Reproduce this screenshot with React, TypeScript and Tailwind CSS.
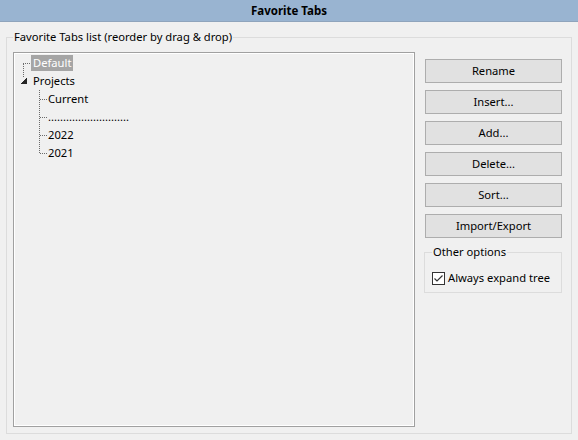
import React from 'react';

const buttons = ['Rename', 'Insert...', 'Add...', 'Delete...', 'Sort...', 'Import/Export'];

function TreeLines() {
  // dotted connector lines of the tree view
  return (
    <svg className="absolute left-0 top-0 pointer-events-none" width="60" height="120" shapeRendering="crispEdges">
      <g stroke="#6b6b6b" strokeWidth="1" strokeDasharray="1 1">
        <line x1="8" y1="9.5" x2="16" y2="9.5" />
        <line x1="8.5" y1="10" x2="8.5" y2="24" />
        <line x1="24.5" y1="36" x2="24.5" y2="100" />
        <line x1="25" y1="45.5" x2="32" y2="45.5" />
        <line x1="25" y1="63.5" x2="32" y2="63.5" />
        <line x1="25" y1="81.5" x2="32" y2="81.5" />
        <line x1="25" y1="99.5" x2="32" y2="99.5" />
      </g>
      <polygon points="11.5,24 11.5,29.5 6,29.5" fill="#262626" />
    </svg>
  );
}

function Tree() {
  return (
    <div className="w-[402px] h-[375px] border border-[#a0a0a0]">
      <div className="relative h-full border border-white">
        <TreeLines />
        <div className="h-[18px] flex items-center pl-[16px]">
          <span className="bg-[#a5a5a5] text-white px-[2px] leading-[16px]">Default</span>
        </div>
        <div className="h-[18px] flex items-center pl-[18px]">Projects</div>
        <div className="h-[18px] flex items-center pl-[33px]">Current</div>
        <div className="h-[18px] flex items-center pl-[33px]">...........................</div>
        <div className="h-[18px] flex items-center pl-[33px]">2022</div>
        <div className="h-[18px] flex items-center pl-[33px]">2021</div>
      </div>
    </div>
  );
}

export default function App() {
  return (
    <div className="w-[578px] h-[440px] bg-[#f0f0f0] text-[11.2px] text-black font-['Noto_Sans',sans-serif] leading-[16px]">
      <div className="h-[22px] bg-[#99b4d1] border-b border-[#8fa4bc] flex items-center justify-center font-bold text-[11.5px]">
        Favorite Tabs
      </div>

      <fieldset className="mx-[6px] mt-[7px] h-[405px] border border-[#dcdcdc] pl-[6px] pt-[7px]">
        <legend className="px-[1px]">Favorite Tabs list (reorder by drag &amp; drop)</legend>
        <div className="flex">
          <Tree />
          <div className="ml-[9px] w-[138px] pt-[7px] flex flex-col">
            <div className="flex flex-col gap-[7px] pl-[1px]">
              {buttons.map((b) => (
                <button
                  key={b}
                  className="h-[24px] w-[137px] bg-[#e1e1e1] border border-[#adadad] flex items-center justify-center"
                >
                  {b}
                </button>
              ))}
            </div>

            <fieldset className="mt-[6px] h-[49px] border border-[#dcdcdc] pl-[7px] pt-[10px]">
              <legend className="px-[1px]">Other options</legend>
              <div className="flex items-center gap-[3px]">
                <div className="w-[13px] h-[13px] border border-[#333333] bg-white flex items-center justify-center">
                  <svg width="11" height="11" viewBox="0 0 11 11">
                    <path d="M1.5 5.5 L4 8 L9.5 2.5" fill="none" stroke="#333333" strokeWidth="1.2" />
                  </svg>
                </div>
                <span>Always expand tree</span>
              </div>
            </fieldset>
          </div>
        </div>
      </fieldset>
    </div>
  );
}
